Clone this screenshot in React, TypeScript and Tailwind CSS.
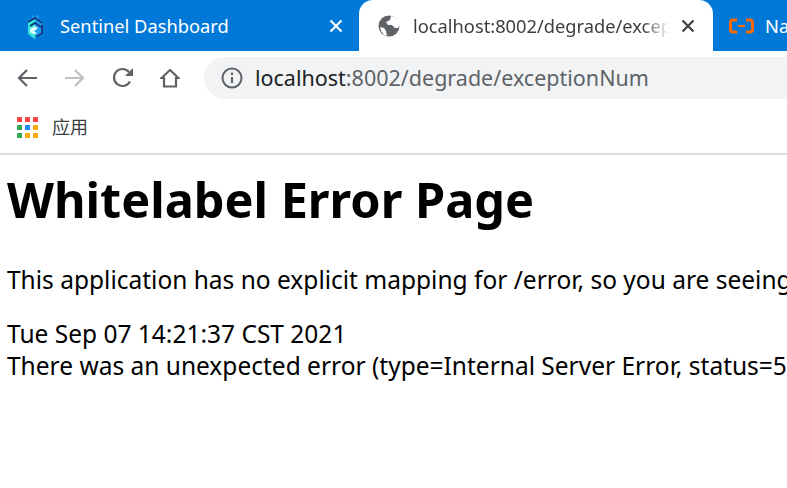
const uiFont = "font-['Noto_Sans','Noto_Sans_CJK_SC',sans-serif]";

function SentinelLogo() {
  return (
    <svg width="18" height="26" viewBox="0 0 18 26" fill="none">
      <path d="M2 6l3 1 2-5 2 3 3-4 1 6 3 1v13l-7 5-7-5z" fill="#1f9bf0" />
      <path d="M2 8l7-3v21l-7-5z" fill="#2fe6dc" />
      <path d="M2 9l7-4 7 5M4 13l5-3 6 4M16 12v8l-6 4" stroke="#142a6b" strokeWidth="1.500" />
      <path d="M4 16l5-3 3 2.500-4 2.500 3 2-3 1.500-4-2z" fill="#d8fff8" />
    </svg>
  );
}

function GlobeIcon() {
  return (
    <svg width="22" height="22" viewBox="0 0 22 22">
      <circle cx="11" cy="11" r="10.500" fill="#5f6368" />
      <path d="M13 1l-1 4-4 2 2 3 4 0 3 3 3 0 2-3-1-4-4-4zM2 12l4 1 2 3 1 5-3-1-3-4z" fill="#fff" />
    </svg>
  );
}

function AliLogo() {
  return (
    <svg width="25" height="16" viewBox="0 0 25 16" fill="none">
      <path d="M8 2H4Q1.500 2 1.500 4.500v7Q1.500 14 4 14h4M17 2h4q2.500 0 2.500 2.500v7q0 2.500-2.500 2.500h-4" stroke="#ff6a00" strokeWidth="3" />
      <path d="M9 8h7" stroke="#ff6a00" strokeWidth="2" />
    </svg>
  );
}

function CloseIcon({ color }: { color: string }) {
  return (
    <svg width="14" height="14" viewBox="0 0 14 14">
      <path d="M1.500 1.500l11 11M12.500 1.500l-11 11" stroke={color} strokeWidth="2.200" />
    </svg>
  );
}

function BackIcon({ color }: { color: string }) {
  return (
    <svg width="20" height="18" viewBox="0 0 20 18" fill="none">
      <path d="M20 9H2M10 1L2 9l8 8" stroke={color} strokeWidth="2.200" />
    </svg>
  );
}

function ForwardIcon({ color }: { color: string }) {
  return (
    <svg width="20" height="18" viewBox="0 0 20 18" fill="none">
      <path d="M0 9h18M10 1l8 8-8 8" stroke={color} strokeWidth="2.200" />
    </svg>
  );
}

function ReloadIcon() {
  return (
    <svg width="22" height="22" viewBox="0 0 22 22" fill="none">
      <path d="M18 14.500A8.500 8.500 0 1 1 17 5" stroke="#5f6368" strokeWidth="2.200" />
      <path d="M21 1v8h-8z" fill="#5f6368" />
    </svg>
  );
}

function HomeIcon() {
  return (
    <svg width="20" height="20" viewBox="0 0 20 20" fill="none">
      <path d="M10 2L1.500 10H4v8.500h12V10h2.500z" stroke="#5f6368" strokeWidth="2.200" strokeLinejoin="miter" />
    </svg>
  );
}

function InfoIcon() {
  return (
    <svg width="22" height="22" viewBox="0 0 22 22" fill="none">
      <circle cx="11" cy="11" r="9.500" stroke="#5f6368" strokeWidth="2" />
      <path d="M11 10v6" stroke="#5f6368" strokeWidth="2.200" />
      <circle cx="11" cy="6.800" r="1.400" fill="#5f6368" />
    </svg>
  );
}

function AppsIcon() {
  const colors = ["#f44", "#f44", "#f44", "#34a853", "#1a8cff", "#fbab0c", "#34a853", "#fbab0c", "#fbab0c"];
  return (
    <div className="grid grid-cols-3 gap-[3px]">
      {colors.map((c, i) => (
        <span key={i} className="h-[5px] w-[5px]" style={{ backgroundColor: c }} />
      ))}
    </div>
  );
}

function App() {
  return (
    <div className={`h-[488px] w-[787px] overflow-hidden bg-white ${uiFont}`}>
      {/* tab strip */}
      <div className="flex h-[51px] overflow-hidden bg-[#0078d7]">
        <div className="flex w-[359px] shrink-0 items-center pl-[26px]">
          <SentinelLogo />
          <span className="ml-[16px] text-[18.3px] text-white">Sentinel Dashboard</span>
          <span className="ml-[100px]"><CloseIcon color="#ffffff" /></span>
        </div>
        <div className="flex w-[354px] shrink-0 items-center rounded-t-[14px] bg-white pl-[19px]">
          <GlobeIcon />
          <span className="ml-[13px] w-[256px] overflow-hidden whitespace-nowrap text-[18.3px] text-[#3c4043] [mask-image:linear-gradient(to_right,black_90%,transparent)]">
            localhost:8002/degrade/exception
          </span>
          <span className="ml-[12px]"><CloseIcon color="#3c4043" /></span>
        </div>
        <div className="flex items-center pl-[16px]">
          <AliLogo />
          <span className="ml-[11px] text-[18.3px] text-white">Nacos</span>
        </div>
      </div>

      {/* toolbar */}
      <div className="flex h-[54px] items-center pl-[17px]">
        <BackIcon color="#5f6368" />
        <span className="ml-[28px]"><ForwardIcon color="#bdc1c6" /></span>
        <span className="ml-[27px]"><ReloadIcon /></span>
        <span className="ml-[26px]"><HomeIcon /></span>
        <div className="ml-[24px] flex h-[42px] flex-1 items-center rounded-l-[21px] bg-[#f1f3f4] pl-[17px]">
          <InfoIcon />
          <span className="ml-[12px] whitespace-nowrap text-[21.5px] text-[#5f6368]">
            <span className="text-[#202124]">localhost</span>:8002/degrade/exceptionNum
          </span>
        </div>
      </div>

      {/* bookmarks */}
      <div className="flex h-[50px] items-center border-b-2 border-[#dadce0] pb-[3px] pl-[17px]">
        <AppsIcon />
        <span className="ml-[14px] text-[18px] text-[#3c4043]">应用</span>
      </div>

      {/* page */}
      <div className="whitespace-nowrap pl-[7px] text-black">
        <h1 className="mt-[12px] text-[48.6px] font-bold leading-[64px]">Whitelabel Error Page</h1>
        <p className="mt-[33px] text-[24.5px] leading-[32px]">
          This application has no explicit mapping for /error, so you are seeing this as a fallback.
        </p>
        <p className="mt-[22px] text-[24.5px] leading-[32px]">Tue Sep 07 14:21:37 CST 2021</p>
        <p className="text-[24.5px] leading-[32px]">
          There was an unexpected error (type=Internal Server Error, status=500).
        </p>
      </div>
    </div>
  );
}

export default App;
